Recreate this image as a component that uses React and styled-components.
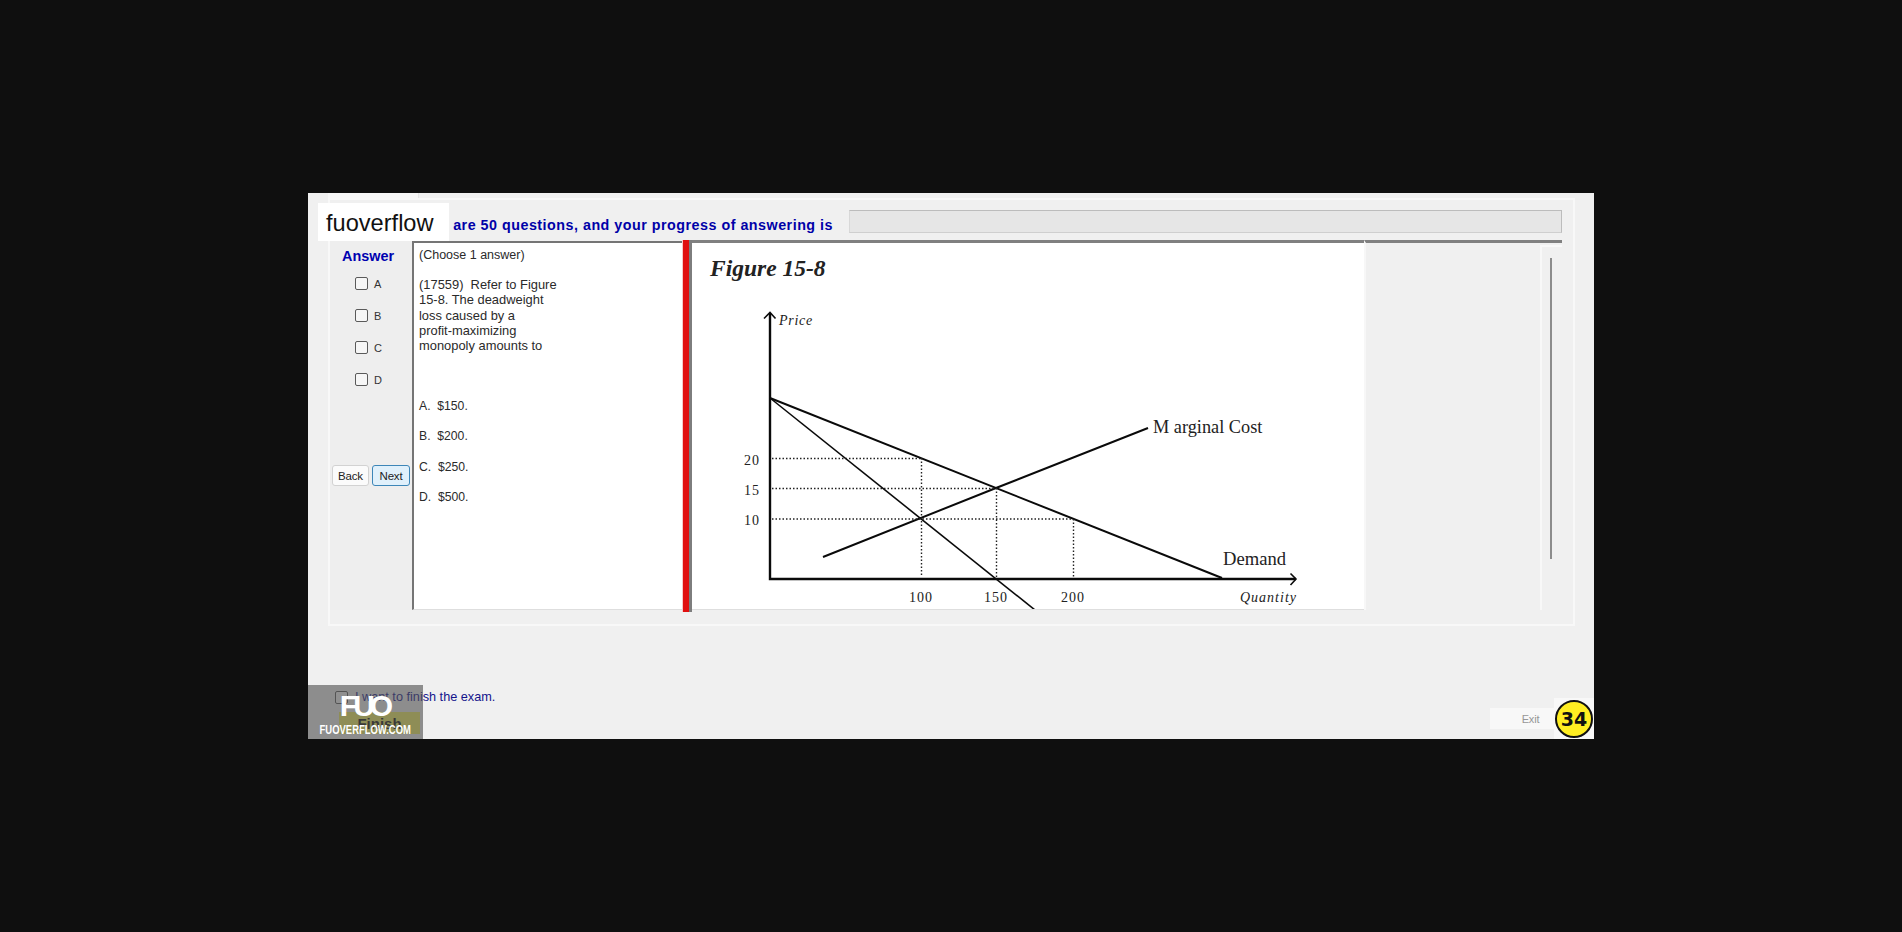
import React from "react";
import styled, { createGlobalStyle } from "styled-components";

const Global = createGlobalStyle`
  html, body { margin: 0; height: 100%; background: #0f0f0f; }
  #root { height: 100%; }
  * { box-sizing: border-box; }
`;
const Page = styled.div`
  height: 932px; display: flex; align-items: center; justify-content: center;
  font-family: "Liberation Sans", Arial, sans-serif; font-size: 12px; color: #2a2a2a;
`;
const Win = styled.div`
  position: relative; width: 1286px; height: 546px; background: #f0f0f0;
  overflow: hidden; display: flex; flex-direction: column;
`;
const TabStrip = styled.div`height: 5px; flex: none; padding-left: 20px;`;
const Tab = styled.div`width: 91px; height: 5px; background: #f7f7f7; border-right: 1px solid #e6e6e6;`;
const Frame = styled.div`
  flex: none; margin: 0 19px 0 20px; height: 428px; border: 2px solid #f8f8f8;
  display: flex; flex-direction: column;
`;
const Header = styled.div`
  height: 41px; display: flex; align-items: center; padding-top: 2px;
`;
const HeaderText = styled.div`
  width: 503px; text-align: right; white-space: nowrap; color: #0000a8; padding-top: 6px;
  font-size: 14.3px; font-weight: 700; letter-spacing: 0.5px; margin-right: 16px;
`;
const Progress = styled.div`
  width: 713px; height: 23px; background: #e6e6e6;
  border: 1px solid #bcbcbc; border-bottom-color: #cfcfcf; border-left-color: #d8d8d8;
`;
const Main = styled.div`
  height: 369px; display: flex; align-items: stretch;
`;
const AnswerCol = styled.div`
  width: 82px; flex: none; display: flex; flex-direction: column; align-items: center;
  padding-top: 8px; background: #eeeeee;
`;
const AnswerTitle = styled.div`
  color: #0000b0; font-weight: 700; font-size: 14.4px; height: 28px; margin-right: 6px; line-height: 15px;
`;
const Options = styled.div`
  display: flex; flex-direction: column; gap: 19px; margin-left: -5px;
`;
const OptRow = styled.label`
  display: flex; align-items: center; gap: 6px; height: 13px; font-size: 11px; color: #333;
`;
const Box = styled.span`
  display: inline-block; flex: none; width: 13px; height: 13px; background: #f6f6f6;
  border: 1px solid #5a5a5a; border-radius: 2px;
`;
const NavRow = styled.div`
  display: flex; gap: 3px; margin-top: 79px; align-self: flex-start; margin-left: 2px;
`;
const NavBtn = styled.button`
  height: 21px; width: ${p => (p.$primary ? 38 : 37)}px; padding: 0; font: 11.5px "Liberation Sans", Arial, sans-serif;
  letter-spacing: -0.2px; color: #222; background: ${p => (p.$primary ? "#e0f0fb" : "#fbfbfb")};
  border: 1px solid ${p => (p.$primary ? "#3d86b8" : "#d2d2d2")}; border-radius: 3px;
`;
const Question = styled.div`
  width: 271px; flex: none; background: #fff; border-left: 2px solid #757575; border-top: 2px solid #757575;
  border-bottom: 1px solid #dedede; padding: 5px 0 0 5px; line-height: 15.3px;
`;
const Choose = styled.div`height: 29px; font-size: 12.5px;`;
const Stem = styled.div`height: 77px; font-size: 12.9px; white-space: nowrap;`;
const AnswerList = styled.div`display: flex; flex-direction: column; margin-top: 45px;`;
const AnswerLine = styled.div`height: ${p => p.$h}px; white-space: pre; font-size: 12.2px;`;
const Splitter = styled.div`
  width: 10px; height: 372px; margin: -1px 0 0 -1px; flex: none;
  background: #e01010; border-right: 3px solid #7d7d7d; border-left: 1px solid #f7c9c9;
`;
const Figure = styled.div`
  width: 672px; flex: none; margin-top: -1px; background: #fff; border-top: 3px solid #808080;
  border-bottom: 1px solid #dedede; overflow: hidden;
`;
const FigureSvg = styled.svg`display: block;`;
const Side = styled.div`
  width: 198px; flex: none; margin-top: -1px; border-top: 3px solid #808080; border-left: 2px solid #f7f7f7;
  display: flex; justify-content: flex-end;
`;
const Track = styled.div`
  width: 22px; margin-top: 2px; border-left: 2px solid #f8f8f8; border-top: 2px solid #f8f8f8;
  display: flex; justify-content: center; padding-top: 11px;
`;
const Thumb = styled.div`width: 2px; height: 301px; background: #8c8c8c; margin-right: 2px;`;
const Footer = styled.div`
  flex: 1; display: flex; justify-content: space-between; padding: 64px 39px 0 27px;
`;
const FinishCol = styled.div`display: flex; flex-direction: column;`;
const FinishRow = styled.label`
  display: flex; align-items: center; gap: 7px; color: #14148c; font-size: 12.7px; height: 14px;
`;
const FinishBtn = styled.button`
  width: 81px; height: 22px; margin: 8px 0 0 4px; padding: 0; border: 0;
  background: #f2f060; color: #111; font: 700 15px "Liberation Sans", Arial, sans-serif;
`;
const ExitBtn = styled.button`
  width: 65px; height: 21px; align-self: flex-end; padding: 0 0 0 16px; border: 0; margin-bottom: 10px;
  background: #f8f8f8; color: #969696; font: 11px "Liberation Sans", Arial, sans-serif; letter-spacing: -0.2px;
`;
const BrandTag = styled.div`
  position: absolute; left: 10px; top: 10px; width: 131px; height: 38px; background: #fff;
  color: #111; font-size: 23.6px; line-height: 41px; padding-left: 8px;
`;
const Watermark = styled.div`
  position: absolute; left: 0; bottom: 0; width: 115px; height: 54px; background: rgba(80,80,80,.62);
  color: #fff; display: flex; flex-direction: column; align-items: center;
`;
const WmLogo = styled.div`
  font-size: 30px; line-height: 30px; margin-top: 6px; letter-spacing: -5px; padding-right: 3px; font-weight: 700;
`;
const WmSite = styled.div`
  font-size: 13.5px; line-height: 13px; font-weight: 700; white-space: nowrap; transform: scaleX(.7); margin-top: 2px;
`;
const BadgeCorner = styled.div`
  position: absolute; right: 0; bottom: 0; width: 40px; height: 41px; background: #f8f8f8;
  display: flex; align-items: center; justify-content: center;
`;
const Badge = styled.div`
  width: 38px; height: 38px; border-radius: 50%; background: #ffee22; border: 2px solid #111;
  color: #111; font: 700 19px "DejaVu Sans", sans-serif; display: flex; align-items: center; justify-content: center;
`;

const Axis = styled.text`font-family: "Liberation Serif", "Times New Roman", serif; fill: #222;`;

function Chart() {
  const dot = { stroke: "#222", strokeWidth: 1.4, strokeDasharray: "1.5 2", fill: "none" };
  const solid = { stroke: "#0a0a0a", fill: "none" };
  return (
    <FigureSvg width="672" height="366" viewBox="692 243 672 366">
      <Axis x="710" y="276" fontSize="23.5" fontWeight="700" fontStyle="italic">Figure 15-8</Axis>
      <path d="M770 313V579H1296" {...solid} strokeWidth="2.4" />
      <path d="M764 318.5L770 312.5L775.5 318.5M1290.5 573.5L1296 579L1290.5 585" {...solid} strokeWidth="1.6" />
      <path d="M770 398L1222 578" {...solid} strokeWidth="2" />
      <path d="M770 398L1035 610" {...solid} strokeWidth="1.6" />
      <path d="M823 557L996 488L1148 428" {...solid} strokeWidth="2" />
      <path d="M772 458.5H921M772 488.5H996M772 519H1073M921.5 458V577M996.5 488V577M1073.5 519V577" {...dot} />
      <Axis x="744" y="465" fontSize="14" letterSpacing="1">20</Axis>
      <Axis x="744" y="495" fontSize="14" letterSpacing="1">15</Axis>
      <Axis x="744" y="525" fontSize="14" letterSpacing="1">10</Axis>
      <Axis x="909" y="602" fontSize="14" letterSpacing="1">100</Axis>
      <Axis x="984" y="602" fontSize="14" letterSpacing="1">150</Axis>
      <Axis x="1061" y="602" fontSize="14" letterSpacing="1">200</Axis>
      <Axis x="779" y="325" fontSize="14" fontStyle="italic" letterSpacing="0.7">Price</Axis>
      <Axis x="1153" y="433" fontSize="18.3" xmlSpace="preserve">M arginal Cost</Axis>
      <Axis x="1223" y="565" fontSize="18.6">Demand</Axis>
      <Axis x="1240" y="602" fontSize="14" fontStyle="italic" letterSpacing="1">Quantity</Axis>
    </FigureSvg>
  );
}

export default function App() {
  return (
    <Page>
      <Global />
      <Win>
        <TabStrip><Tab /></TabStrip>
        <Frame>
          <Header>
            <HeaderText>There are 50 questions, and your progress of answering is</HeaderText>
            <Progress />
          </Header>
          <Main>
            <AnswerCol>
              <AnswerTitle>Answer</AnswerTitle>
              <Options>
                {["A", "B", "C", "D"].map(l => (
                  <OptRow key={l}><Box />{l}</OptRow>
                ))}
              </Options>
              <NavRow>
                <NavBtn>Back</NavBtn>
                <NavBtn $primary>Next</NavBtn>
              </NavRow>
            </AnswerCol>
            <Question>
              <Choose>(Choose 1 answer)</Choose>
              <Stem>
                (17559)&nbsp; Refer to Figure<br />
                15-8. The deadweight<br />
                loss caused by a<br />
                profit-maximizing<br />
                monopoly amounts to
              </Stem>
              <AnswerList>
                <AnswerLine $h={30}>A.  $150.</AnswerLine>
                <AnswerLine $h={31}>B.  $200.</AnswerLine>
                <AnswerLine $h={30}>C.  $250.</AnswerLine>
                <AnswerLine $h={30}>D.  $500.</AnswerLine>
              </AnswerList>
            </Question>
            <Splitter />
            <Figure><Chart /></Figure>
            <Side><Track><Thumb /></Track></Side>
          </Main>
        </Frame>
        <Footer>
          <FinishCol>
            <FinishRow><Box />I want to finish the exam.</FinishRow>
            <FinishBtn>Finish</FinishBtn>
          </FinishCol>
          <ExitBtn>Exit</ExitBtn>
        </Footer>
        <BrandTag>fuoverflow</BrandTag>
        <Watermark>
          <WmLogo>FUO</WmLogo>
          <WmSite>FUOVERFLOW.COM</WmSite>
        </Watermark>
        <BadgeCorner><Badge>34</Badge></BadgeCorner>
      </Win>
    </Page>
  );
}
